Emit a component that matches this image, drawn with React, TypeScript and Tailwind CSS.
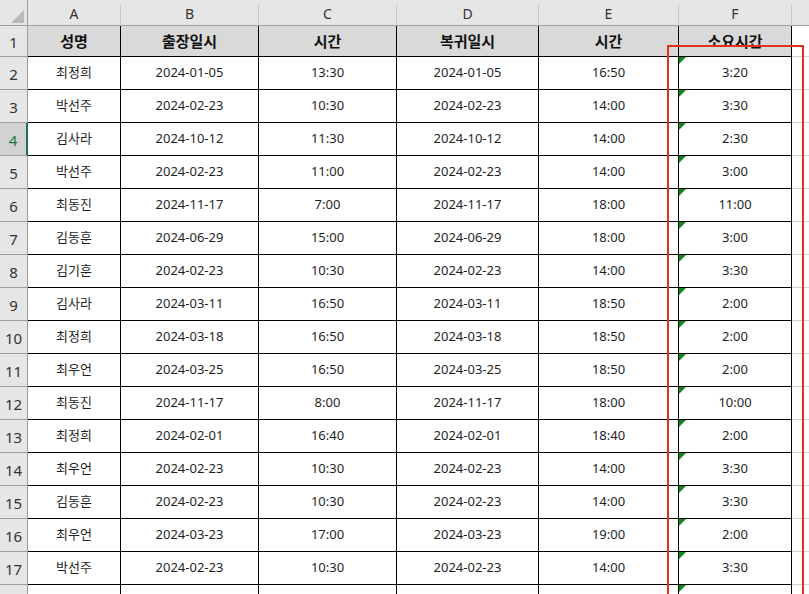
import React from "react";

const rows: string[][] = [
  ["최정희", "2024-01-05", "13:30", "2024-01-05", "16:50", "3:20"],
  ["박선주", "2024-02-23", "10:30", "2024-02-23", "14:00", "3:30"],
  ["김사라", "2024-10-12", "11:30", "2024-10-12", "14:00", "2:30"],
  ["박선주", "2024-02-23", "11:00", "2024-02-23", "14:00", "3:00"],
  ["최동진", "2024-11-17", "7:00", "2024-11-17", "18:00", "11:00"],
  ["김동훈", "2024-06-29", "15:00", "2024-06-29", "18:00", "3:00"],
  ["김기훈", "2024-02-23", "10:30", "2024-02-23", "14:00", "3:30"],
  ["김사라", "2024-03-11", "16:50", "2024-03-11", "18:50", "2:00"],
  ["최정희", "2024-03-18", "16:50", "2024-03-18", "18:50", "2:00"],
  ["최우언", "2024-03-25", "16:50", "2024-03-25", "18:50", "2:00"],
  ["최동진", "2024-11-17", "8:00", "2024-11-17", "18:00", "10:00"],
  ["최정희", "2024-02-01", "16:40", "2024-02-01", "18:40", "2:00"],
  ["최우언", "2024-02-23", "10:30", "2024-02-23", "14:00", "3:30"],
  ["김동훈", "2024-02-23", "10:30", "2024-02-23", "14:00", "3:30"],
  ["최우언", "2024-03-23", "17:00", "2024-03-23", "19:00", "2:00"],
  ["박선주", "2024-02-23", "10:30", "2024-02-23", "14:00", "3:30"],
  ["", "", "", "", "", ""],
];

const headers = ["성명", "출장일시", "시간", "복귀일시", "시간", "소요시간"];
const letters = ["A", "B", "C", "D", "E", "F"];

const gridCols = "grid grid-cols-[28px_93px_138px_138px_142px_140px_113px_1fr]";

function Flag() {
  return (
    <svg className="absolute left-0 top-0" width="7" height="7" viewBox="0 0 7 7">
      <polygon points="0,0 7,0 0,7" fill="#12861a" />
    </svg>
  );
}

export default function App() {
  return (
    <div
      className="relative h-[594px] w-[809px] overflow-hidden bg-white text-[#1f1f1f]"
      style={{ fontFamily: '"Noto Sans", "Noto Sans CJK KR", sans-serif' }}
    >
      {/* column letters */}
      <div className={`${gridCols} h-[26px] border-b border-[#9e9e9e] bg-[#e6e6e6] text-[14px] text-[#333]`}>
        <div className="relative border-r border-[#9e9e9e]">
          <svg className="absolute bottom-[3px] right-[3px]" width="13" height="13" viewBox="0 0 13 13">
            <polygon points="13,0 13,13 0,13" fill="#b8b8b8" />
          </svg>
        </div>
        {letters.map((l) => (
          <div key={l} className="flex items-center justify-center pt-[1px]">
            <span className="flex-1 text-center">{l}</span>
            <span className="mt-[4px] h-[21px] w-px bg-[#c6c6c6]" />
          </div>
        ))}
        <div />
      </div>

      {/* header row */}
      <div className={`${gridCols} h-[31px]`}>
        <div className="flex items-center justify-center border-r border-b border-[#9e9e9e] bg-[#e6e6e6] pt-[2px] text-[15px] text-[#333]">
          1
        </div>
        {headers.map((h, i) => (
          <div
            key={i}
            className="flex items-center justify-center border-r border-b border-black bg-[#d9d9d9] text-[15px] font-bold text-[#111]"
          >
            {h}
          </div>
        ))}
        <div className="border-b border-[#d4d4d4]" />
      </div>

      {/* data rows */}
      {rows.map((r, ri) => {
        const num = ri + 2;
        const selected = num === 4;
        const last = ri === rows.length - 1;
        return (
          <div key={ri} className={`${gridCols} h-[33px]`}>
            <div
              className={
                selected
                  ? "flex items-center justify-center border-r-2 border-b border-r-[#217346] border-b-[#9e9e9e] bg-[#d2d2d2] pt-[2px] text-[15px] text-[#217346]"
                  : "flex items-center justify-center border-r border-b border-[#9e9e9e] bg-[#e6e6e6] pt-[2px] text-[15px] text-[#333]"
              }
            >
              {last ? "" : num}
            </div>
            {r.map((c, ci) => (
              <div
                key={ci}
                className="relative flex items-center justify-center border-r border-b border-black pb-[1px] text-[13px]"
              >
                {ci === 5 && <Flag />}
                {c}
              </div>
            ))}
            <div className="border-b border-[#d4d4d4]" />
          </div>
        );
      })}

      {/* highlight box */}
      <div className="absolute left-[667px] top-[45px] h-[600px] w-[137px] border-2 border-[#e2321e]" />
    </div>
  );
}
